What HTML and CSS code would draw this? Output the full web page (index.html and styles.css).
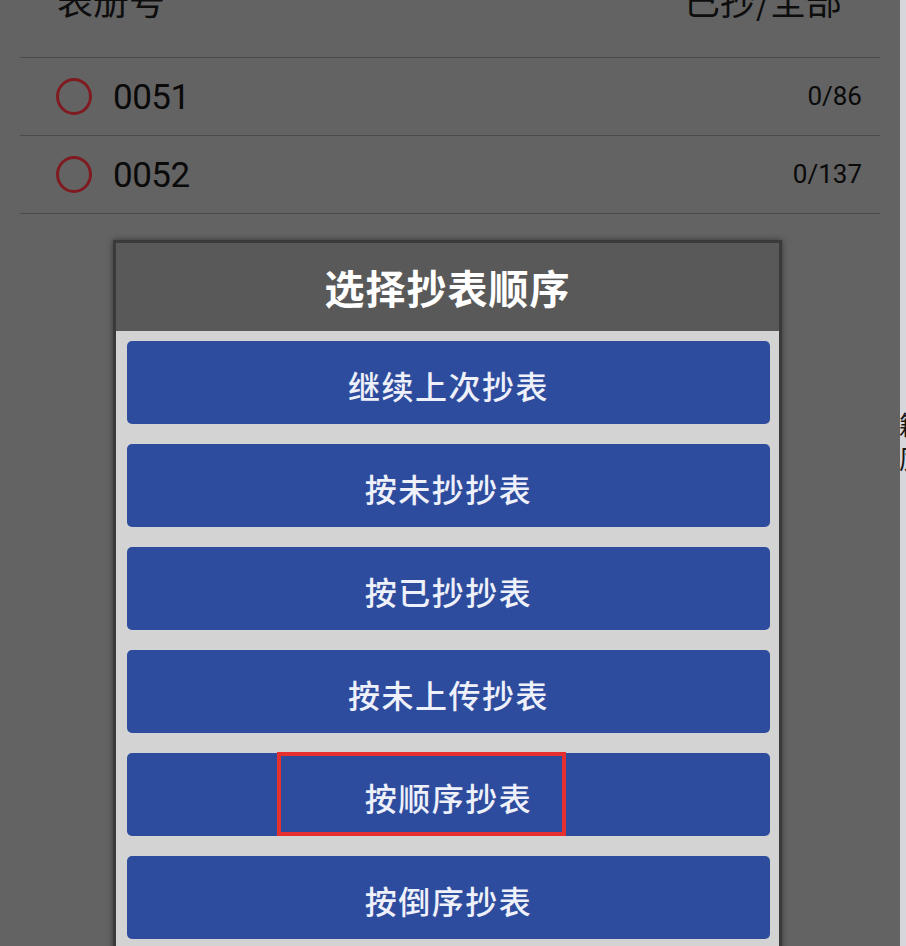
FILE: index.html
```html
<!DOCTYPE html>
<html lang="zh">
<head>
<meta charset="utf-8">
<title>选择抄表顺序</title>
<link rel="stylesheet" href="styles.css">
</head>
<body>
<div class="screen">
  <div class="phone">
    <div class="list">
      <div class="list-head">
        <span class="head-text">表册号</span>
        <span class="head-text">已抄/全部</span>
      </div>
      <div class="row">
        <span class="radio"></span>
        <span class="code">0051</span>
        <span class="count">0/86</span>
      </div>
      <div class="row">
        <span class="radio"></span>
        <span class="code">0052</span>
        <span class="count">0/137</span>
      </div>
    </div>

    <div class="dialog">
      <div class="dialog-title">选择抄表顺序</div>
      <div class="dialog-body">
        <div class="btn">继续上次抄表</div>
        <div class="btn">按未抄抄表</div>
        <div class="btn">按已抄抄表</div>
        <div class="btn">按未上传抄表</div>
        <div class="btn btn-marked">按顺序抄表<span class="mark"></span></div>
        <div class="btn">按倒序抄表</div>
      </div>
    </div>
  </div>
  <div class="side">
    <span class="side-char">籍</span>
    <span class="side-char">厉</span>
  </div>
</div>
</body>
</html>
```
FILE: styles.css
```css
html, body {
  margin: 0;
  padding: 0;
}

body {
  width: 906px;
  height: 946px;
  overflow: hidden;
  background: #636363;
  font-family: Roboto, "Noto Sans CJK SC", "Noto Sans", sans-serif;
}

.screen {
  display: flex;
  width: 906px;
  height: 946px;
}

.phone {
  position: relative;
  width: 900px;
  height: 946px;
  background: #636363;
  overflow: hidden;
}

.side {
  width: 6px;
  height: 946px;
  background: #d6d7dd;
  overflow: hidden;
  display: flex;
  flex-direction: column;
  gap: 6px;
  padding-top: 410px;
  box-sizing: border-box;
}

.side-char {
  display: block;
  height: 28px;
  overflow: hidden;
  font-family: "Noto Sans CJK SC", sans-serif;
  font-size: 26px;
  line-height: 28px;
  color: #151515;
  white-space: nowrap;
  margin-left: -1px;
}

.list {
  margin: 0 20px;
}

.list-head {
  height: 57px;
  display: flex;
  justify-content: space-between;
  align-items: flex-start;
  padding: 0 38px 0 37px;
  border-bottom: 1.5px solid #4b4b4b;
  overflow: hidden;
}

.head-text {
  font-family: "Noto Sans CJK SC", sans-serif;
  font-size: 36px;
  line-height: 36px;
  margin-top: -19px;
  color: #0e0e0e;
}

.row {
  height: 77px;
  display: flex;
  align-items: center;
  padding: 0 18px 0 36px;
  border-bottom: 1.5px solid #4b4b4b;
}

.radio {
  width: 30px;
  height: 31px;
  border: 3px solid #7f1b20;
  border-radius: 50%;
  flex: none;
}

.code {
  margin-left: 21px;
  font-size: 35px;
  color: #0a0a0a;
  letter-spacing: -0.5px;
  margin-top: 2px;
}

.count {
  margin-left: auto;
  font-size: 26px;
  color: #0a0a0a;
  margin-top: -1px;
}

.dialog {
  position: absolute;
  left: 113px;
  top: 240px;
  width: 669px;
  border: 3px solid #3a3a3a;
  border-bottom: none;
  box-sizing: border-box;
  box-shadow: 0 0 6px rgba(0, 0, 0, 0.45);
  background: #d3d3d3;
}

.dialog-title {
  height: 88px;
  background: #595959;
  color: #ffffff;
  font-family: "Noto Sans CJK SC", sans-serif;
  font-weight: 700;
  font-size: 40px;
  display: flex;
  align-items: center;
  justify-content: center;
  letter-spacing: 1px;
}

.dialog-body {
  display: flex;
  flex-direction: column;
  gap: 20px;
  padding: 10px 9px 20px 11px;
  background: #d3d3d3;
}

.btn {
  position: relative;
  height: 83px;
  background: #2d4c9d;
  border-radius: 5px;
  color: #eef0fa;
  font-family: "Noto Sans CJK SC", sans-serif;
  font-weight: 500;
  font-size: 32px;
  letter-spacing: 1.5px;
  display: flex;
  align-items: center;
  justify-content: center;
  padding-top: 5px;
  box-sizing: border-box;
}

.mark {
  position: absolute;
  left: 150px;
  top: -1px;
  width: 289px;
  height: 84px;
  border: 4px solid #e5302f;
  box-sizing: border-box;
}
```
